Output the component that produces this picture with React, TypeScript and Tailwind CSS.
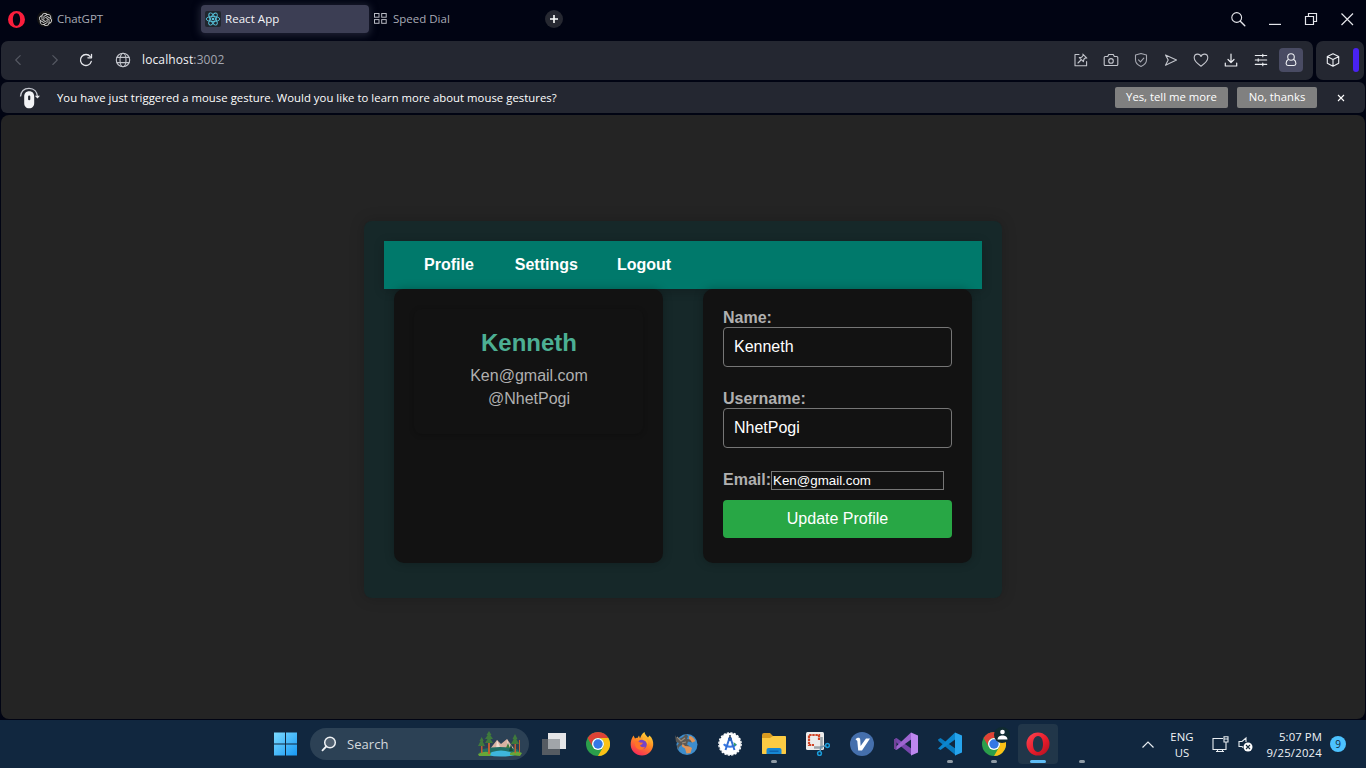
import React from "react";
import { SiOpenai } from "react-icons/si";

type P = { className?: string; children?: React.ReactNode };

/** Thin-line 16px glyph used in the browser toolbar. */
const Line = ({ className = "", children }: P) => (
  <svg
    viewBox="0 0 16 16"
    className={"size-4 shrink-0 " + className}
    fill="none"
    stroke="currentColor"
    strokeWidth="1.1"
    strokeLinecap="round"
    strokeLinejoin="round"
  >
    {children}
  </svg>
);

const OperaMark = () => (
  <svg viewBox="0 0 16 16" className="size-[17px] shrink-0">
    <path fillRule="evenodd" fill="#fa1e3c" d="M8 0a8 8 0 1 0 0 16A8 8 0 0 0 8 0Zm0 2.100c2.300 0 3.400 2.800 3.400 5.900s-1.100 5.900-3.400 5.900S4.600 11.100 4.600 8s1.100-5.900 3.400-5.900Z" />
  </svg>
);

const ReactMark = () => (
  <svg viewBox="0 0 16 16" className="size-4 shrink-0">
    <rect width="16" height="16" rx="2" fill="#20262e" />
    <g fill="none" stroke="#58c4dc" strokeWidth="0.9">
      <ellipse cx="8" cy="8" rx="6.800" ry="2.600" />
      <ellipse cx="8" cy="8" rx="6.800" ry="2.600" transform="rotate(60 8 8)" />
      <ellipse cx="8" cy="8" rx="6.800" ry="2.600" transform="rotate(120 8 8)" />
    </g>
    <circle cx="8" cy="8" r="1.300" fill="#58c4dc" />
  </svg>
);

function TabStrip() {
  return (
    <div className="flex h-[41px] shrink-0 items-start pt-[5px] pl-2">
      <div className="flex h-7 w-[193px] items-center text-[#a9abb5]">
        <OperaMark />
        <span className="ml-[12px] flex size-4 items-center justify-center rounded-full bg-[#131313]">
          <SiOpenai className="size-[13px] text-[#d8d8d8]" />
        </span>
        <span className="ml-1 text-[11.5px] tracking-[-0.05px]">ChatGPT</span>
      </div>
      <div className="flex h-7 w-[168px] items-center rounded-[4px] bg-[#3c3e54] pl-1 shadow-[0_1px_7px_2px_#3a3c5080]">
        <ReactMark />
        <span className="ml-1 text-[11.500px] tracking-[0.05px] text-[#f4f4f8]">React App</span>
      </div>
      <div className="flex h-7 w-[176px] items-center pl-[5px] text-[#a9abb5]">
        <svg viewBox="0 0 13 11" className="-mt-px h-[11px] w-[13px]" fill="none" stroke="#b9bbc4">
          <rect x=".5" y=".5" width="4.500" height="3.700" />
          <rect x="7.700" y=".5" width="4.500" height="3.700" />
          <rect x=".5" y="6.600" width="4.500" height="3.700" />
          <rect x="7.700" y="6.600" width="4.500" height="3.700" />
        </svg>
        <span className="ml-[6px] text-[11.500px]">Speed Dial</span>
      </div>
      <div className="mt-[5px] flex size-[18px] items-center justify-center rounded-full bg-[#262831]">
        <svg viewBox="0 0 8 8" className="size-2" stroke="#fff" strokeWidth="1.600">
          <path d="M4 0v8M0 4h8" />
        </svg>
      </div>
      <div className="mr-3 ml-auto flex h-7 items-center gap-[22px] text-[#e4e5ea]">
        <Line className="mr-px">
          <circle cx="6.700" cy="6.500" r="4.900" />
          <path d="m10.300 10.200 4.500 4.500" strokeWidth="1.400" />
        </Line>
        <svg viewBox="0 0 12 12" className="mr-px size-3" stroke="currentColor" strokeWidth="1.200">
          <path d="M0 11.400h12" />
        </svg>
        <svg viewBox="0 0 14 14" className="size-[14px]" fill="none" stroke="currentColor">
          <path d="M1.500 4.500h8v8h-8zM4.500 4.500v-3h8v8h-3" strokeWidth="1.200" />
        </svg>
        <svg viewBox="0 0 14 14" className="size-[14px]" stroke="currentColor" strokeWidth="1.200">
          <path d="m1.500 1.500 11.500 11.500M13 1.500 1.500 13" />
        </svg>
      </div>
    </div>
  );
}

function AddressBar() {
  return (
    <div className="flex h-[39px] shrink-0 gap-[3px] pr-[2px] pl-px">
      <div className="flex flex-1 items-center rounded-[7px] bg-[#242731] pr-[10px] pb-px pl-[9px] text-[#c3c5cc]">
        <Line className="text-[#555862]"><path d="M10.200 3.700 5.700 8l4.500 4.500" /></Line>
        <Line className="ml-[21px] text-[#555862]"><path d="M5.800 3.700 10.300 8l-4.500 4.500" /></Line>
        <Line className="ml-[15px] text-[#e4e5ea]">
          <path d="M13.300 9.300A5.500 5.500 0 1 1 12.300 4.600" strokeWidth="1.300" />
          <path d="M13.500 2.300v3.500h-3.600" strokeWidth="1.300" />
        </Line>
        <Line className="ml-[21px]">
          <circle cx="8" cy="8" r="6.700" />
          <ellipse cx="8" cy="8" rx="3" ry="6.700" />
          <path d="M2 5.400h12M2 10.600h12" />
        </Line>
        <span className="ml-[11px] text-[12px] tracking-[0.120px] text-[#f2f2f5]">
          localhost<span className="text-[#a3a6b0]">:3002</span>
        </span>
        <div className="ml-auto flex items-center gap-[14px]">
          <Line>
            <path d="M6 2.500H2v11.300h11.600V9.500M5 11l3-3M9.800 2.200l4 4M10.500 3 8.700 5.200l-2.400.4 4.100 4.100.5-2.500L13 5.500" strokeWidth="1.100" />
          </Line>
          <Line>
            <path d="M2.200 4.500h2.500l1-2h4.600l1 2h2.500q1 0 1 1v7q0 1-1 1H2.200q-1 0-1-1v-7q0-1 1-1z" />
            <circle cx="8" cy="8.900" r="2.300" />
          </Line>
          <Line className="text-[#a6a8b1]">
            <path d="M8 1.500 13.500 3v4.800c0 3-2.200 5.300-5.500 6.700-3.300-1.400-5.500-3.700-5.500-6.700V3zM5.500 7.800l2 2 3.300-3.600" />
          </Line>
          <Line><path d="M2.500 3 13.500 8 2.500 13.200 5.200 8z" /></Line>
          <Line>
            <path d="M8 14.200C4 11.400 1.200 9 1.200 5.800c0-2.200 1.500-3.700 3.400-3.700C6.300 2.100 7.500 3 8 4.500c.5-1.500 1.700-2.400 3.400-2.400 1.900 0 3.400 1.500 3.400 3.700C14.800 9 12 11.400 8 14.200Z" />
          </Line>
          <Line className="text-[#eceef2]"><path d="M8 2v8M5 7.500l3 3 3-3M2.300 11v3h11.400v-3" strokeWidth="1.200" /></Line>
          <Line className="text-[#eceef2]"><path d="M2.300 3.500h11.400M2.300 8h11.400M2.300 12.400h11.400M9.800 2.200v2.600M5.200 6.700v2.600M9.800 11.100v2.600" /></Line>
          <div className="-ml-1 flex size-6 items-center justify-center rounded-[4px] bg-[#494b63] text-[#eceef2]">
            <Line>
              <circle cx="8" cy="5" r="3.300" />
              <path d="M5.200 7.500C3.600 8.400 3.100 9.800 3.100 11.600q0 1.900 1.900 1.900h6q1.900 0 1.900-1.900c0-1.800-.5-3.200-2.100-4.100" />
            </Line>
          </div>
        </div>
      </div>
      <div className="flex w-12 items-center rounded-[7px] bg-[#242731] pb-px pl-[9px] text-[#eceef2]">
        <Line><path d="m8 1.800 5.700 2.800v6.700L8 14.300l-5.700-3V4.600zM2.500 4.700 8 7.500l5.500-2.800M8 7.500v6.600" /></Line>
        <span className="ml-3 h-6 w-[6px] rounded-[3px] bg-[#4922f2]" />
      </div>
    </div>
  );
}

function GestureBar() {
  return (
    <div className="mx-px mt-[2px] flex h-[31px] shrink-0 items-center rounded-[6px] bg-[#242731] pl-[18px] text-white">
      <svg viewBox="0 0 22 22" className="h-[22px] w-[22px]" fill="none">
        <path d="M1.500 9.500C2 4 5.500 1.300 10 1.300c5 0 8.300 3.400 8.500 8.500" stroke="#c6c8d0" strokeWidth="1.300" />
        <path d="m15.800 8.800 2.700 2.800 2.500-2.800z" fill="#e6e7ec" />
        <path fillRule="evenodd" fill="#f2f3f6" d="M10.200 4.300c3.300 0 5 2.200 5 5.500V16c0 3.200-1.700 5.300-5 5.300s-5-2.100-5-5.300V9.800c0-3.300 1.700-5.500 5-5.500Zm0 4.200a1.100 1.100 0 0 0-1.100 1.100v2.600a1.100 1.100 0 0 0 2.200 0V9.600a1.100 1.100 0 0 0-1.100-1.100Z" />
      </svg>
      <span className="ml-[16px] pt-[2px] text-[11.300px] tracking-[0.045px]">
        You have just triggered a mouse gesture. Would you like to learn more about mouse gestures?
      </span>
      <button className="ml-auto h-[21px] w-[113px] rounded-[2px] bg-[#808080] text-[11.300px]">Yes, tell me more</button>
      <button className="ml-[9px] h-[21px] w-20 rounded-[2px] bg-[#808080] text-[11.300px]">No, thanks</button>
      <svg viewBox="0 0 8 8" className="mr-[20px] ml-[20px] size-2" stroke="#fff" strokeWidth="1.100">
        <path d="m1 1 6 6M7 1 1 7" />
      </svg>
    </div>
  );
}

function Field({ label, value }: { label: string; value: string }) {
  return (
    <label className="mb-[23px] block leading-[18px] font-bold text-[#b0b0b0]">
      {label}
      <input
        readOnly
        value={value}
        className="block h-10 w-full rounded-[4px] border border-[#767676] bg-[#121212] px-[10px] font-normal text-white"
      />
    </label>
  );
}

function ProfilePage() {
  return (
    <main className="mx-px mt-[2px] flex h-[604px] shrink-0 justify-center rounded-[8px] bg-[#242424] pt-[106px] font-['Liberation_Sans',Arial,sans-serif] text-[16px]">
      <div className="h-[377px] w-[638px] rounded-[8px] bg-[#162829] p-5 shadow-[0_0_15px_rgba(0,0,0,0.2)]">
        <nav className="flex h-12 items-center bg-[#00796b] px-10 font-bold text-white shadow-[0_2px_10px_rgba(0,0,0,0.2)]">
          <a className="mr-[41px]">Profile</a>
          <a className="mr-[39px]">Settings</a>
          <a>Logout</a>
        </nav>
        <div className="flex gap-10 px-[10px]">
          <section className="h-[274px] w-[269px] rounded-[10px] bg-[#121212] p-5 shadow-[0_0_10px_rgba(0,0,0,0.25)]">
            <div className="h-[125px] rounded-[8px] pt-[20px] pl-px text-center text-[#b0b0b0] shadow-[0_1px_5px_rgba(0,0,0,0.25)]">
              <h2 className="text-[24px] leading-[28px] font-bold text-[#4caf93]">Kenneth</h2>
              <p className="mt-[7px] leading-[23px]">Ken@gmail.com</p>
              <p className="leading-[23px]">@NhetPogi</p>
            </div>
          </section>
          <section className="h-[274px] w-[269px] rounded-[10px] bg-[#121212] px-5 pt-5 shadow-[0_0_10px_rgba(0,0,0,0.25)]">
            <Field label="Name:" value="Kenneth" />
            <Field label="Username:" value="NhetPogi" />
            <label className="flex h-[19px] items-center font-bold text-[#b0b0b0]">
              <span className="-mt-[2px] w-12">Email:</span>
              <input
                readOnly
                value="Ken@gmail.com"
                className="h-[19px] w-[173px] border border-[#767676] bg-[#121212] px-px text-[13.333px] font-normal text-white"
              />
            </label>
            <button className="mt-[10px] h-[38px] w-full rounded-[4px] bg-[#28a745] pb-px text-white">Update Profile</button>
          </section>
        </div>
      </div>
    </main>
  );
}

const App24 = ({ children }: P) => (
  <svg viewBox="0 0 24 24" className="size-6">{children}</svg>
);

const ChromeArt = () => (
  <>
    <circle cx="12" cy="12" r="12" fill="#2b9e4b" />
    <path d="M12 0a12 12 0 0 1 10.400 6H12a6 6 0 0 0-5.200 9L1.600 6A12 12 0 0 1 12 0Z" fill="#df4236" />
    <path d="M22.400 6A12 12 0 0 1 12 24l5.200-9A6 6 0 0 0 12 6Z" fill="#fbc116" />
    <circle cx="12" cy="12" r="6" fill="#fff" />
    <circle cx="12" cy="12" r="4.700" fill="#3478e5" />
  </>
);

function LandscapeArt() {
  return (
    <svg viewBox="0 0 46 26" className="h-[26px] w-[46px]">
      <path d="M13 18 20 9l4 4 6-5 8 11z" fill="#d9b2a2" />
      <path d="m20 9 3 7 3 3-7-1zM30 8l2 6 4 5-5-1z" fill="#f2ddd2" />
      <path d="M6 18q17-4 34 0l4 4-9 3H10l-8-3z" fill="#206d63" />
      <path d="M15 21q9-3 18 0l5 3q-14 3-28 0z" fill="#3eb6dc" />
      <path d="M1 23q7-4 13-1l-1 3H2zM33 22q7-3 12 0l-2 3-10-1z" fill="#68a637" />
      <path d="M11 2h2v21h-2zM4 8h1.500v14H4zM37.500 6H39v16h-1.500zM42 9h1v13h-1z" fill="#bd6030" />
      <path d="M12 0 9.500 4h1.200L8 8h2.500L8 12h8l-2.500-4H16l-2.700-4h1.200zM4.700 6 2.500 10h1L1 15h7l-2.500-5h1.200zM38 3l-2.500 5h1.200L34 13h8l-2.700-5h1.200zM31 12l-2 5h4z" fill="#3f7a3c" />
      <path d="m34 13-2 7h4z" fill="#174d3d" />
    </svg>
  );
}

function Item({ children, state }: P & { state?: "idle" | "active" }) {
  return (
    <div className="flex w-11 flex-col items-center">
      <div className={"mt-1 flex h-10 w-10 flex-col items-center rounded-[4px] pt-2 " + (state === "active" ? "bg-[#213649]" : "")}>
        <div className="flex h-6 items-center">{children}</div>
        {state === "idle" && <span className="mt-1 h-[3px] w-[6px] rounded-full bg-[#8f9ba6]" />}
        {state === "active" && <span className="mt-1 h-[3px] w-4 rounded-full bg-[#5ebcf5]" />}
      </div>
    </div>
  );
}

function Taskbar() {
  return (
    <footer className="flex h-12 shrink-0 bg-[#11273f] pl-[263px]">
      <Item>
        <svg viewBox="0 0 24 24" className="size-6">
          <defs>
            <linearGradient id="win" x1="0" y1="0" x2="24" y2="24" gradientUnits="userSpaceOnUse">
              <stop stopColor="#7fdcff" />
              <stop offset="1" stopColor="#1698f5" />
            </linearGradient>
          </defs>
          <path d="M1 .5h11v11H1zM13 .5h11v11H13zM1 12.500h11v11H1zM13 12.500h11v11H13z" fill="url(#win)" />
        </svg>
      </Item>
      <div className="mt-2 mr-[3px] ml-[3px] flex h-8 w-[219px] items-center rounded-full bg-[#2c4155] pl-[11px]">
        <svg viewBox="0 0 16 16" className="size-4" fill="#506070" stroke="#eff2f5" strokeWidth="1.500" strokeLinecap="round">
          <circle cx="9" cy="6.500" r="5.300" />
          <path d="m5.200 10.500-3.700 3.800" strokeWidth="1.800" />
        </svg>
        <span className="ml-[10px] pt-px text-[13px] tracking-[0.050px] text-[#d4d9de]">Search</span>
        <span className="mr-[6px] ml-auto"><LandscapeArt /></span>
      </div>
      <Item>
        <App24>
          <path d="M6 1h18v16H6z" fill="#e5e5e7" />
          <path d="M0 7h18v16H0z" fill="#555b62" />
          <path d="M6 7h12v10H6z" fill="#a1a5a9" />
        </App24>
      </Item>
      <Item><App24><ChromeArt /></App24></Item>
      <Item>
        <App24>
          <defs>
            <linearGradient id="ff" x1=".8" y1="0" x2=".3" y2="1">
              <stop stopColor="#ffe23e" /><stop offset=".45" stopColor="#ff8b22" /><stop offset="1" stopColor="#f72759" />
            </linearGradient>
          </defs>
          <path d="M3.500 3.500 5 6.500c1-.6 1.500-.7 2.500-.6L9 3.500l1 3c1-3 2-5 4.500-6.500.3 2.500 2 3.500 3.500 5.500L19.500 3.500c3 2.500 4 6 3.700 9.500C22.500 19 18 23.500 12 23.500S1 19 .7 13c-.2-3.500.8-6.500 2.800-9.500Z" fill="url(#ff)" />
          <circle cx="12" cy="12.500" r="4.800" fill="#7544c7" />
          <path d="M5 10c2-2 4-1 5 .5l3 .2c-.5 1.800-2.200 2-3 2.500.5 2 3 2.500 5 1.500-1 3-4 3.800-6.500 2.500S4.500 14 5 10Z" fill="#ff7428" />
          <path d="M13 5c4 1.500 6 4.500 4.500 8-.5-3-2-4.500-5-5z" fill="#ffb02e" />
        </App24>
      </Item>
      <Item>
        <App24>
          <circle cx="13" cy="12.500" r="10.500" fill="#3e8dcc" />
          <path d="M15 4c3 0 5 2 6.500 5l-3 1.500L15 9zM8 12l5 1 5 3-1.500 5-4 .5-1.500-5-3-2z" fill="#e09457" />
          <path d="M1 3c1 2 2 3.500 4 4l4-2 3-3 2 2-1 3 3 .5 2 3-4-1-1 3 3 2-5-.5-2-2-4 3-1 3-1-4 2-3-3-1z" fill="#5a5855" />
          <path d="m3 5 4 4 4-3M8 11l4-1" stroke="#9b8e7d" strokeWidth="1.100" fill="none" />
        </App24>
      </Item>
      <Item>
        <App24>
          <circle cx="12" cy="12" r="10.900" fill="#fff" />
          <circle cx="12" cy="12" r="11.200" fill="none" stroke="#fff" strokeWidth="1.300" strokeDasharray="2.200 1.320" />
          <path d="M5.800 12.200c2.500 3.300 10 3.300 12.400 0" fill="none" stroke="#3979e4" strokeWidth="2" />
          <path d="m11.500 6-4 12M12.500 6l4 12" fill="none" stroke="#326ed5" strokeWidth="2" />
          <path d="m15.500 10 3 2.500-2.300 1.800z" fill="#34a066" />
          <circle cx="12" cy="7" r="2" fill="#2c5fae" />
          <path d="M12 3v3" stroke="#263a55" strokeWidth="1.500" />
        </App24>
      </Item>
      <Item state="idle">
        <App24>
          <path d="M0 3q0-2 2-2h6l3 3h11q2 0 2 2v15q0 1-1 1H1q-1 0-1-1z" fill="#d99b20" />
          <path d="M0 6h8l3-2h12q1 0 1 1v16q0 1-1 1H1q-1 0-1-1z" fill="#fccb43" />
          <path d="M4.500 22v-4q0-2 2-2h11q2 0 2 2v4z" fill="#1687d4" />
          <path d="M7.500 18.500h9V20h-9z" fill="#0d63b0" />
        </App24>
      </Item>
      <Item>
        <App24>
          <path d="M1.500 0h15Q18 0 18 1.500v15q0 1.500-1.500 1.500h-15Q0 18 0 16.500v-15Q0 0 1.500 0z" fill="#ececec" />
          <path d="M13 8V3H3v10h5" fill="none" stroke="#d04426" strokeWidth="2.200" strokeDasharray="2.400 .7" />
          <path d="M15.500 5v10.500H8" stroke="#9da5aa" strokeWidth="2.600" fill="none" />
          <path d="m15 15 5-1.500M15 14l-1 6" stroke="#6e93aa" strokeWidth="1.500" />
          <circle cx="21.500" cy="13.500" r="1.900" fill="none" stroke="#199cda" strokeWidth="1.500" />
          <circle cx="13.500" cy="21.500" r="1.900" fill="none" stroke="#199cda" strokeWidth="1.500" />
        </App24>
      </Item>
      <Item>
        <App24>
          <circle cx="12" cy="12" r="12" fill="#456fac" />
          <path d="M5.500 7.200c2.500-2 4.500-1.700 4.700.3l.4 6.500L16 6.500h4L12 18.500H8.200L7.300 9z" fill="#fff" />
        </App24>
      </Item>
      <Item>
        <App24>
          <path d="M0 7.500 2.500 6 18 17v6.500L.5 9z" fill="#7746ad" />
          <path d="M0 16.500 17 .5l1.500 6L2.500 18z" fill="#9e65d1" />
          <path d="m17 .5 7 3v17l-7 3z" fill="#bd87ef" />
          <path d="M0 7.500 2.500 6v12L0 16.500z" fill="#714298" />
        </App24>
      </Item>
      <Item state="idle">
        <App24>
          <path d="M0 7.500 2.500 6 18 17v6.500L.5 9z" fill="#087abf" />
          <path d="M0 16.500 17 .5l1.500 6L2.500 18z" fill="#0b86cf" />
          <path d="m17 .5 7 3v17l-7 3z" fill="#26a4ed" />
        </App24>
      </Item>
      <Item state="idle">
        <div className="relative size-6">
          <App24><ChromeArt /></App24>
          <svg viewBox="0 0 16 16" className="absolute -top-[5px] left-3 size-4">
            <circle cx="8" cy="8" r="8" fill="#102b31" />
            <circle cx="8.500" cy="5" r="2.300" fill="#fff" />
            <path d="M3.500 12.500c0-5.500 10-5.500 10 0z" fill="#fff" />
          </svg>
        </div>
      </Item>
      <Item state="active">
        <App24>
          <defs>
            <linearGradient id="op" x2="1" y2="1">
              <stop stopColor="#ff4754" /><stop offset=".55" stopColor="#e81c2b" /><stop offset="1" stopColor="#ad1020" />
            </linearGradient>
          </defs>
          <path fillRule="evenodd" d="M12 .5a11.500 11.500 0 1 0 0 23 11.500 11.500 0 0 0 0-23Zm0 3.500c3.400 0 5 3.700 5 8s-1.600 8-5 8-5-3.700-5-8 1.600-8 5-8Z" fill="url(#op)" />
        </App24>
      </Item>
      <Item state="idle"><span /></Item>

      <div className="ml-auto flex items-center text-[11.300px] leading-4 text-[#f0f3f6]">
        <svg viewBox="0 0 12 7" className="h-[7px] w-3" fill="none" stroke="#e8edf1" strokeWidth="1.200">
          <path d="m.5 6.500 5.500-5.500 5.500 5.500" />
        </svg>
        <span className="ml-4 w-6 pt-px text-center tracking-[0.1px] whitespace-nowrap">ENG<br />US</span>
        <svg viewBox="0 0 17 17" className="ml-[18px] size-[17px]" fill="none" stroke="#e8edf1" strokeWidth="1.100">
          <path d="M11 2.500H1v11h13V9M4 15.500h8M5.500 13.500v2M10.500 13.500v2" />
          <path d="M12 .700h4V6h-4zM14 6v3M12 3h4" />
        </svg>
        <svg viewBox="0 0 15 16" className="ml-[9px] h-4 w-[15px]" fill="none" stroke="#e8edf1" strokeWidth="1.100">
          <path d="M8 6V2L4 5.500H1v5h3l1 1" />
          <circle cx="10" cy="11" r="4.500" fill="#fff" stroke="none" />
          <path d="m8 9 4 4M12 9l-4 4" stroke="#192c3d" />
        </svg>
        <span className="ml-[9px] w-[60px] pt-px text-right whitespace-nowrap"><span className="tracking-[0.1px]">5:07 PM</span><br /><span className="tracking-[0.230px]">9/25/2024</span></span>
        <span className="mr-5 ml-2 flex size-4 items-center justify-center rounded-full bg-[#4cc2ff] text-[10px] text-[#142b3d]">9</span>
      </div>
    </footer>
  );
}

export default function App() {
  return (
    <div className="flex h-[768px] w-[1366px] flex-col overflow-hidden bg-[#010413] font-['Open_Sans','Noto_Sans',sans-serif]">
      <TabStrip />
      <AddressBar />
      <GestureBar />
      <ProfilePage />
      <div className="h-px shrink-0" />
      <Taskbar />
    </div>
  );
}
